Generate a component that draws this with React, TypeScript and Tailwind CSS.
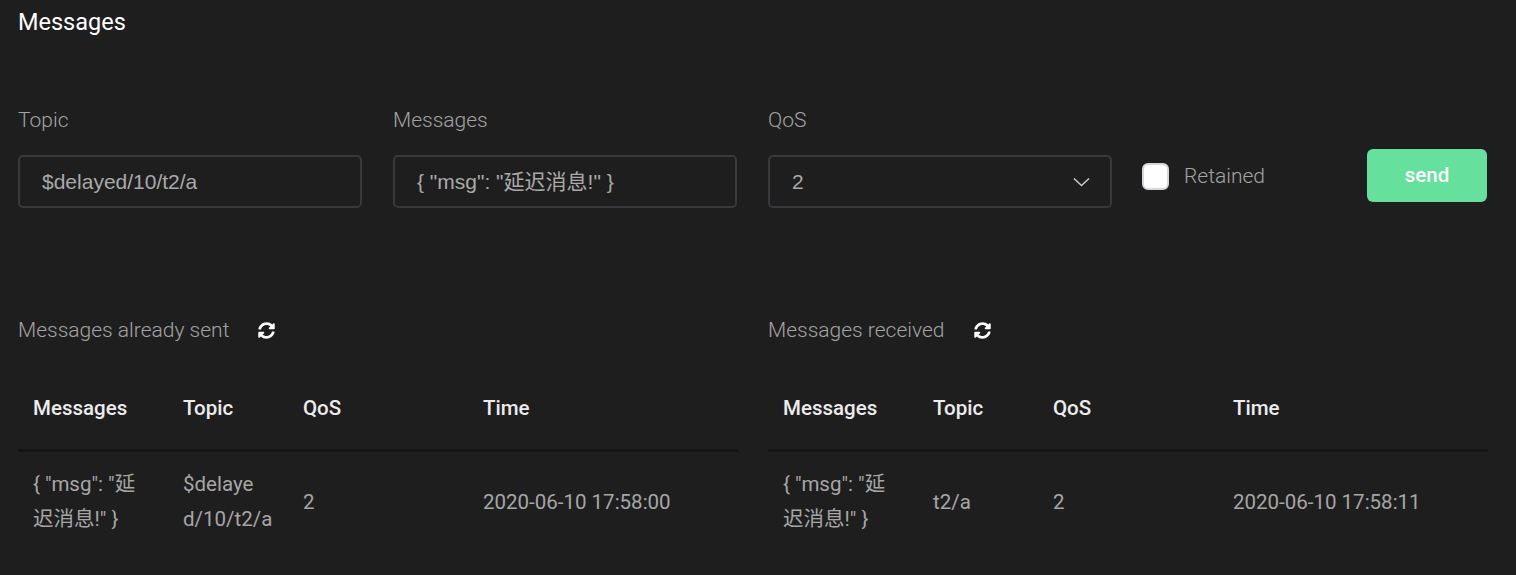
import { FaSyncAlt } from 'react-icons/fa';

type Row = { msg: React.ReactNode; topic: React.ReactNode; qos: string; time: string };

const rows: { sent: Row; received: Row } = {
	sent: {
		msg: '{ "msg": "延迟消息!" }',
		topic: (
			<>
				$delaye
				<wbr />
				d/10/t2/a
			</>
		),
		qos: '2',
		time: '2020-06-10 17:58:00',
	},
	received: {
		msg: '{ "msg": "延迟消息!" }',
		topic: 't2/a',
		qos: '2',
		time: '2020-06-10 17:58:11',
	},
};

const inputFont = { fontFamily: '"Liberation Sans", "Noto Sans CJK SC", sans-serif' };

const Field = ({ label, children }: { label: string; children: React.ReactNode }) => (
	<div className="flex w-[344px] flex-col">
		<span className="h-[30px] text-[21px] leading-[30px] font-light text-[#a3a3a3]">{label}</span>
		<div className="mt-[20px] flex h-[53px] items-center rounded-[5px] border-2 border-[#39383c] bg-[#1f1e1f] pl-[22px] pr-[22px]">
			{children}
		</div>
	</div>
);

const MessageTable = ({ title, row }: { title: string; row: Row }) => (
	<div className="flex w-[720px] flex-col">
		<div className="flex h-[30px] items-center">
			<span className="text-[21px] leading-[30px] font-light text-[#a3a3a3]">{title}</span>
			<FaSyncAlt className="ml-[29px] h-[17px] w-[17px] text-white" />
		</div>
		<div className="mt-[22px] flex h-[85px] items-center border-b-[3px] border-[#161516] text-[20.5px] font-medium text-[#ececec]">
			<div className="w-[150px] pl-[15px]">Messages</div>
			<div className="w-[120px] pl-[15px]">Topic</div>
			<div className="w-[180px] pl-[15px]">QoS</div>
			<div className="pl-[15px]">Time</div>
		</div>
		<div className="flex items-center py-[15px] text-[20.5px] leading-[35px] text-[#a6a6a6]">
			<div className="w-[150px] pr-[30px] pl-[15px] break-all">{row.msg}</div>
			<div className="w-[120px] pr-[12px] pl-[15px]">{row.topic}</div>
			<div className="w-[180px] pl-[15px]">{row.qos}</div>
			<div className="pl-[15px]">{row.time}</div>
		</div>
	</div>
);

export default function App() {
	return (
		<div
			className="min-h-[575px] w-full bg-[#1f1e1f] pl-[18px]"
			style={{ fontFamily: 'Roboto, "Noto Sans CJK SC", sans-serif' }}
		>
			<div className="h-[40px] pt-[4px] text-[23.5px] leading-[36px] text-white">Messages</div>

			<div className="mt-[65px] flex items-start">
				<div className="flex gap-[31px]">
					<Field label="Topic">
						<span className="text-[21px] text-[#a9a9a9]" style={inputFont}>
							$delayed/10/t2/a
						</span>
					</Field>
					<Field label="Messages">
						<span className="text-[21px] text-[#a9a9a9]" style={inputFont}>
							{'{ "msg": "延迟消息!" }'}
						</span>
					</Field>
					<Field label="QoS">
						<span className="grow text-[21px] text-[#a9a9a9]" style={inputFont}>
							2
						</span>
						<svg
							width="17"
							height="10"
							viewBox="0 0 17 10"
							fill="none"
							stroke="#c8c8c8"
							strokeWidth="1.6"
							className="mr-[-2px]"
						>
							<path d="M1 1.5 L8.5 8.5 L16 1.5" />
						</svg>
					</Field>
				</div>
				<div className="ml-[30px] mt-[58px] flex h-[27px] items-center">
					<div className="h-[27px] w-[27px] rounded-[6px] border-2 border-[#d6d6dc] bg-white" />
					<span className="ml-[15px] text-[21px] font-light text-[#a3a3a3]">Retained</span>
				</div>
				<button className="ml-[102px] mt-[44px] h-[53px] w-[120px] rounded-[6px] bg-[#65e09d] text-[20.5px] font-medium text-white">
					send
				</button>
			</div>

			<div className="mt-[107px] flex gap-[30px]">
				<MessageTable title="Messages already sent" row={rows.sent} />
				<MessageTable title="Messages received" row={rows.received} />
			</div>
		</div>
	);
}
